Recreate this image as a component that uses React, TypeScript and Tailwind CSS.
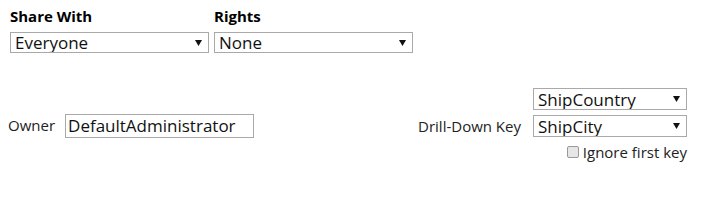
function Caret() {
    return (
        <svg width="7" height="6" viewBox="0 0 7 6" className="absolute right-[7px] top-1/2 -translate-y-1/2 pointer-events-none">
            <path d="M0 0 L7 0 L3.5 6 Z" fill="#111" />
        </svg>
    );
}

function Select({ value, className }: { value: string; className: string }) {
    return (
        <div className={`relative ${className}`}>
            <select
                defaultValue={value}
                className="appearance-none w-full h-full border border-[#a9a9a9] bg-white pl-[4px] pr-[18px] py-0 text-[17px] leading-[19px] text-[#111] outline-none"
            >
                <option>{value}</option>
            </select>
            <Caret />
        </div>
    );
}

export default function App() {
    return (
        <div className="w-[710px] h-[220px] bg-white text-[#222] font-['Segoe_UI','Open_Sans',sans-serif] text-[15px]">
            <div className="flex gap-[5px] pl-[10px] pt-[6px]">
                <div className="flex flex-col w-[199px]">
                    <span className="font-bold text-[15px] leading-[20px] mb-[6px] text-black">Share With</span>
                    <Select value="Everyone" className="h-[21px] w-[199px]" />
                </div>
                <div className="flex flex-col w-[199px]">
                    <span className="font-bold text-[15px] leading-[20px] mb-[6px] text-black">Rights</span>
                    <Select value="None" className="h-[21px] w-[199px]" />
                </div>
            </div>

            <div className="flex items-center justify-between pl-[8px] pr-[23px] mt-[35px]">
                <div className="flex items-center gap-[10px]">
                    <span>Owner</span>
                    <input
                        defaultValue="DefaultAdministrator"
                        className="w-[189px] h-[24px] border border-[#a9a9a9] px-[2px] text-[17px] text-[#111] outline-none"
                    />
                </div>

                <div className="grid grid-cols-[auto_154px] gap-x-[12px] gap-y-[5px] items-center">
                    <span></span>
                    <Select value="ShipCountry" className="h-[22px] w-[154px]" />
                    <span>Drill-Down Key</span>
                    <Select value="ShipCity" className="h-[22px] w-[154px]" />
                    <span></span>
                    <label className="flex items-center justify-end gap-[4px] -mt-[2px]">
                        <span className="w-[12px] h-[12px] border border-[#999] rounded-[2px] bg-[#e6e6e6]"></span>
                        <span>Ignore first key</span>
                    </label>
                </div>
            </div>
        </div>
    );
}
